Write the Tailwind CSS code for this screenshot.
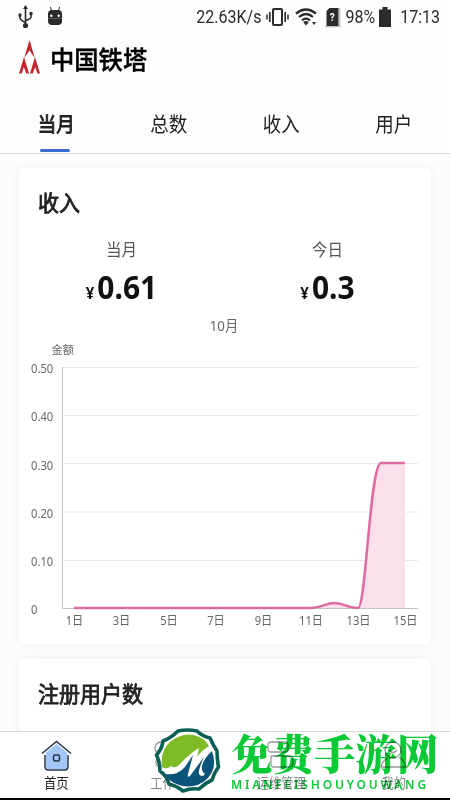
<!DOCTYPE html>
<html lang="zh-CN">
<head>
    <meta charset="UTF-8">
    <meta name="viewport" content="width=device-width, initial-scale=1.0">
    <title>中国铁塔</title>
    <script src="https://cdn.jsdelivr.net/npm/@tailwindcss/browser@4"></script>
</head>
<body class="relative flex flex-col w-[450px] h-[800px] overflow-hidden bg-[#fefefe] text-[#222] font-['Noto_Sans','Noto_Sans_CJK_SC',sans-serif]">

    <!-- Status bar -->
    <div class="h-[34px] shrink-0 flex items-center justify-between pl-[18px] pr-[10px] text-[#2b2b2b] font-['Roboto',sans-serif] text-[16px]">
        <div class="flex items-center gap-[14px]">
            <svg class="w-[15px] h-[24px]" viewBox="0 0 15 24" fill="none" stroke="#2b2b2b" stroke-width="1.6">
                <path d="M7.5 3v17M2 10v3q0 2 5.500 4.500M13 9v3q0 2-5.500 3.500" />
                <path d="M7.500 0L10 4H5zM.5 8.500h3v3h-3z" fill="#2b2b2b" stroke="none" />
                <path d="M11.500 7h3v3h-3z" fill="#2b2b2b" stroke="none" />
                <circle cx="7.500" cy="20.500" r="2.600" fill="#2b2b2b" stroke="none" />
            </svg>
            <svg class="w-[16px] h-[20px] -mt-[3px]" viewBox="0 0 16 20">
                <path d="M3.500 1l1 4M12.500 1l-1 4" stroke="#2b2b2b" stroke-width="1" />
                <path d="M1 8q0-4 4-4h6q4 0 4 4v7q0 4-4 4H5q-4 0-4-4z" fill="#2b2b2b" />
                <path d="M1 12.500h14" stroke="#777" stroke-width=".6" />
                <circle cx="4.300" cy="9.800" r="1.200" fill="#fff" />
                <circle cx="11.700" cy="9.800" r="1.200" fill="#fff" />
            </svg>
        </div>
        <div class="flex items-center">
            <span class="inline-block scale-y-110">22.63K/s</span>
            <svg class="ml-[5px] w-[23px] h-[20px]" viewBox="0 0 23 20" fill="none" stroke="#2b2b2b">
                <rect x="7" y="2" width="9" height="16" rx="1" stroke-width="2" />
                <path d="M3.800 5v10M19.200 5v10" stroke-width="1.700" />
                <path d="M1 7.500v5M22 7.500v5" stroke-width="1.500" />
            </svg>
            <svg class="ml-[6px] w-[23px] h-[18px]" viewBox="0 0 23 18" fill="none" stroke="#2b2b2b" stroke-width="2.300">
                <path d="M1 5.500Q11 -2.500 21 5.500M4 9Q11 3 18 9M7 12.300Q11 9 15 12.300" />
                <path d="M8.300 14.200Q11 12 13.700 14.200L11 17.500z" fill="#2b2b2b" stroke="none" />
                <path d="M17 14h4l-2 3z" fill="#2b2b2b" stroke="none" />
            </svg>
            <svg class="ml-[7px] w-[16px] h-[21px]" viewBox="0 0 16 21">
                <path d="M14.800 1v18.500H0" stroke="#bbb" stroke-width="1.300" fill="none" />
                <path d="M4.500 1h9v18H1.500V4z" fill="#2b2b2b" />
                <text x="4.800" y="13.500" font-size="10" font-weight="700" fill="#fff">?</text>
            </svg>
            <span class="ml-[4px] inline-block scale-y-110">98%</span>
            <svg class="ml-[4px] w-[12px] h-[20px]" viewBox="0 0 12 20">
                <path d="M3.500 0h5v2.500H12V20H0V2.500h3.500z" fill="#2b2b2b" />
            </svg>
            <span class="ml-[9px] inline-block scale-y-110">17:13</span>
        </div>
    </div>

    <!-- Logo -->
    <header class="h-[61px] shrink-0 flex items-start pl-[19px] pt-[5px]">
        <svg class="mt-[1px] w-[21px] h-[34px]" viewBox="0 0 21 34" fill="#c1272d">
            <path d="M10.500 0L15.800 18L10.500 10.500L5.200 18z" />
            <path d="M5 17L10 33.500H7.300L4.800 27L2.700 33.500H0z" />
            <path d="M16 17L21 33.500H18.300L16.200 27L13.700 33.500H11z" />
        </svg>
        <h1 class="ml-[10px] mt-[1px] text-[24.3px] leading-[40px] font-medium text-black scale-y-105 [-webkit-text-stroke:0.4px_black]">中国铁塔</h1>
    </header>

    <!-- Tabs -->
    <nav class="h-[59px] shrink-0 grid grid-cols-4 border-b border-[#dcdee2] text-[18.5px] leading-[58px] text-center">
        <div class="relative [-webkit-text-stroke:0.8px_#222]">
            <span class="inline-block scale-y-110">当月</span>
            <span class="absolute left-[40px] bottom-[1px] w-[30px] h-[3px] rounded-full bg-[#3a6bd0]"></span>
        </div>
        <div><span class="inline-block scale-y-110">总数</span></div>
        <div><span class="inline-block scale-y-110">收入</span></div>
        <div><span class="inline-block scale-y-110">用户</span></div>
    </nav>

    <main class="h-[577px] shrink-0 overflow-hidden bg-[#fcfcfc] px-[19px] pt-[14px]">
        <!-- Income card -->
        <section class="h-[476px] rounded-md bg-white shadow-[0_0_12px_rgba(0,0,0,0.05)]">
            <h2 class="h-[70px] pl-[19px] text-[21px] leading-[70px] [-webkit-text-stroke:0.8px_#222]"><span class="inline-block scale-y-105">收入</span></h2>
            <div class="h-[72px] grid grid-cols-2 text-center">
                <div>
                    <p class="text-[15.5px] leading-[23px] text-[#555] -ml-[1px]"><span class="inline-block scale-y-110">当月</span></p>
                    <p class="mt-[1px] leading-[50px] font-bold text-[#111] -ml-[1px]"><span class="inline-block scale-y-110"><span class="text-[15px]">¥</span><span class="ml-[3px] text-[30px]">0.61</span></span></p>
                </div>
                <div>
                    <p class="text-[15.5px] leading-[23px] text-[#555] -ml-[1px]"><span class="inline-block scale-y-110">今日</span></p>
                    <p class="mt-[1px] leading-[50px] font-bold text-[#111] -ml-[1px]"><span class="inline-block scale-y-110"><span class="text-[15px]">¥</span><span class="ml-[3px] text-[30px]">0.3</span></span></p>
                </div>
            </div>
            <p class="h-[30px] text-center text-[13.3px] leading-[32px] text-[#666] -ml-[2px]"><span class="inline-block scale-y-110">10月</span></p>

            <!-- Daily income chart -->
            <svg class="w-[412px] h-[290px]" viewBox="19 340 412 290" fill="#666" font-size="11.2">
                <path d="M63 367.500h355M63 415.500h355M63 463.500h355M63 512h355M63 560.500h355" stroke="#e8e8e8" />
                <path d="M62.500 367v241.500H418" stroke="#c4c4c4" fill="none" />
                <text x="51.500" y="354">金额</text>
                <g transform="scale(1 1.1)">
                    <text x="31" y="339.500">0.50</text>
                    <text x="31" y="383">0.40</text>
                    <text x="31" y="427">0.30</text>
                    <text x="31" y="470.500">0.20</text>
                    <text x="31" y="514.500">0.10</text>
                    <text x="31" y="558.500">0</text>
                </g>
                <g transform="scale(1 1.1)" text-anchor="middle" font-size="11.200">
                    <text x="74.500" y="568">1日</text>
                    <text x="121.500" y="568">3日</text>
                    <text x="169" y="568">5日</text>
                    <text x="216" y="568">7日</text>
                    <text x="263.500" y="568">9日</text>
                    <text x="311" y="568">11日</text>
                    <text x="358.500" y="568">13日</text>
                    <text x="405.500" y="568">15日</text>
                </g>
                <path d="M311 608C322 608 326 603 334 603C343 603 348 608 358 608C366 608 370 463 381 463H405V608z" fill="#fbdfeb" />
                <path d="M74 608H311C322 608 326 603 334 603C343 603 348 608 358 608C366 608 370 463 381 463H405" fill="none" stroke="#de6ba1" stroke-width="2.500" />
            </svg>
        </section>

        <!-- Registered users card -->
        <section class="mt-[15px] h-[120px] rounded-md bg-white shadow-[0_0_12px_rgba(0,0,0,0.05)]">
            <h2 class="pl-[19px] text-[21px] leading-[71px] [-webkit-text-stroke:0.8px_#222]"><span class="inline-block scale-y-105">注册用户数</span></h2>
        </section>
    </main>

    <!-- Bottom navigation -->
    <footer class="h-[69px] shrink-0 grid grid-cols-4 border-t border-[#d9d9d9] border-b-2 border-b-black bg-white text-center text-[12.3px] leading-[18px] text-[#888]">
        <div class="flex flex-col items-center pt-[8px] text-[#222]">
            <svg class="w-[31px] h-[32px]" viewBox="0 0 31 32" fill="none" stroke="#26344a" stroke-width="1.500">
                <path d="M5 12.500L15.500 4L26 12.500V29H8q-3 0-3-3z" fill="#a3c6f8" stroke="none" />
                <path d="M4 15V26.500q0 3.500 3.500 3.500h16q3.500 0 3.500-3.500V15" />
                <path d="M1 13.500L15.500 1.500L30 13.500" />
                <rect x="12.500" y="15" width="6" height="6" rx="1.500" />
            </svg>
            <span class="mt-[3px] inline-block scale-y-110">首页</span>
        </div>
        <div class="flex flex-col items-center pt-[8px]">
            <svg class="w-[30px] h-[32px]" viewBox="0 0 30 32" fill="none" stroke="#999" stroke-width="1.300">
                <circle cx="7" cy="8" r="6" /><circle cx="8" cy="22" r="6" /><circle cx="22" cy="22" r="6" /><circle cx="22" cy="8" r="6" />
            </svg>
            <span class="mt-[3px] inline-block scale-y-110">工作台</span>
        </div>
        <div class="flex flex-col items-center pt-[8px]">
            <svg class="w-[30px] h-[32px]" viewBox="0 0 30 32" fill="none" stroke="#999" stroke-width="1.300">
                <path d="M5 2h14q3 0 3 3v4q0 3-3 3H5q-3 0-3-3V5q0-3 3-3z" />
                <path d="M5 16h18q4 0 4 4v3q0 4-4 4H8q-3 0-3-3v-8" />
            </svg>
            <span class="mt-[3px] inline-block scale-y-110">运维管理</span>
        </div>
        <div class="flex flex-col items-center pt-[8px]">
            <svg class="w-[30px] h-[32px]" viewBox="0 0 30 32" fill="none" stroke="#999" stroke-width="1.300">
                <circle cx="14" cy="10" r="8" />
                <path d="M10 10q4 5 8 0M9 18q-6 3-7 9h25q-1-6-7-10" />
            </svg>
            <span class="mt-[3px] inline-block scale-y-110">我的</span>
        </div>
    </footer>

    <!-- Site watermark -->
    <div class="absolute left-[154px] top-[728px] flex">
        <svg class="w-[67px] h-[66px]" viewBox="0 0 67 66">
            <path d="M24 3Q33.500 1 43 3Q48 8 56 10Q59 17 63 23Q63 31 64.500 39Q60 45 58 52Q51 55 45 61Q37 60 29 63Q23 58 15 56Q13 48 6 43Q6 34 2.500 27Q8 21 9 13Q17 10 24 3z" fill="#fff" stroke="#0b5f55" stroke-width="3.600" stroke-linejoin="round" />
            <path d="M8 39Q6 22 17 13Q33 1 49 11Q53 14 55 18Q48 22 43 29L45 20Q35 26 25 37Q20 41 17 38Q13 42 8 39z" fill="#7fbb25" />
            <path d="M11 46Q23 48 31 39L39 27L34 46Q33 50 36 48L50 29Q44 42 45 46Q48 50 51 46Q47 43 48 38Q50 30 58 23Q64 40 53 51Q41 62 25 57Q15 54 11 46z" fill="#0a547b" />
        </svg>
        <div class="pl-[10px] pt-[3px] text-[#09c936]">
            <p class="text-[41.500px] leading-[43px] font-black whitespace-nowrap mix-blend-multiply font-['Noto_Serif_CJK_SC','Noto_Sans_CJK_SC',serif]">免费手游网</p>
            <p class="mt-[2px] text-[12px] leading-[18px] font-semibold tracking-[2.8px] whitespace-nowrap mix-blend-multiply font-['Noto_Sans',sans-serif]">MIANFEISHOUYOUWANG</p>
        </div>
    </div>
</body>
</html>
